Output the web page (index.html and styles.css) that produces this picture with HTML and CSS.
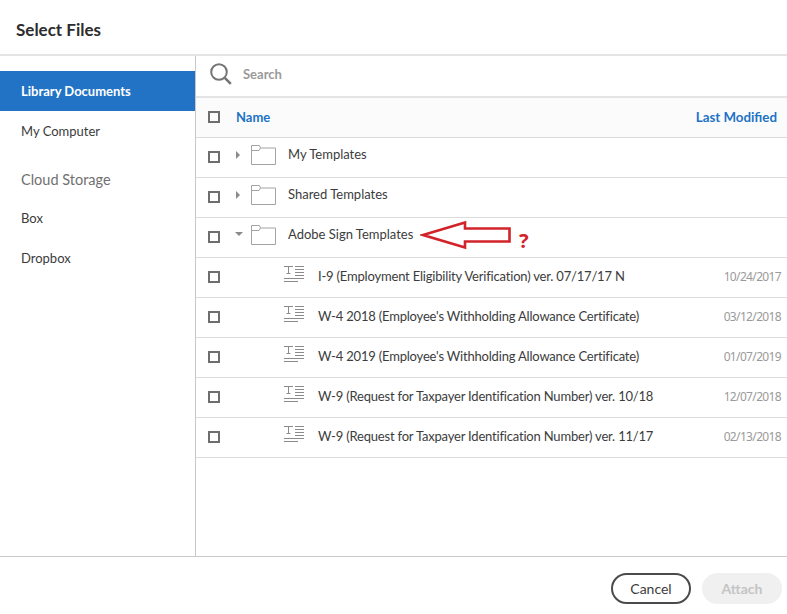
FILE: index.html
```html
<!DOCTYPE html>
<html lang="en">
<head>
    <meta charset="UTF-8">
    <title>Select Files</title>
    <link rel="stylesheet" href="styles.css">
</head>
<body>
    <svg width="0" height="0" class="icon-defs">
        <symbol id="folder" viewBox="0 0 25 20">
            <path d="M0.5 19.5V0.5h8l1 2.5h15v16.5z M0.5 5.5h7.5l1.5-2.5" fill="none" stroke="#a3a3a3" stroke-width="1"/>
        </symbol>
        <symbol id="doc" viewBox="0 0 22 20">
            <path d="M1 1.5h9M5.5 1.5v7M3.5 8.5h4M12 1.5h9M12 4.5h9M12 7.5h9M12 10.5h9M1 13.5h20M1 16.5h14" fill="none" stroke="#8a8a8a" stroke-width="1"/>
        </symbol>
    </svg>

    <div class="dialog">
        <h1 class="dialog-title">Select Files</h1>

        <div class="dialog-body">
            <nav class="sidebar">
                <a class="nav-item active">Library Documents</a>
                <a class="nav-item">My Computer</a>
                <div class="nav-heading">Cloud Storage</div>
                <a class="nav-item">Box</a>
                <a class="nav-item">Dropbox</a>
            </nav>

            <main class="files">
                <div class="search-row">
                    <svg class="search-icon" width="24" height="24" viewBox="0 0 24 24">
                        <circle cx="10" cy="10" r="7.8" fill="none" stroke="#757575" stroke-width="2"/>
                        <path d="M15.8 15.8l6 6" stroke="#757575" stroke-width="2.6" fill="none"/>
                    </svg>
                    <span class="search-text">Search</span>
                </div>

                <div class="head-row">
                    <span class="check"></span>
                    <span class="head-name">Name</span>
                    <span class="head-date">Last Modified</span>
                </div>

                <div class="row">
                    <span class="check"></span>
                    <span class="caret"></span>
                    <svg class="folder"><use href="#folder"/></svg>
                    <span class="folder-name">My Templates</span>
                </div>
                <div class="row">
                    <span class="check"></span>
                    <span class="caret"></span>
                    <svg class="folder"><use href="#folder"/></svg>
                    <span class="folder-name">Shared Templates</span>
                </div>
                <div class="row">
                    <span class="check"></span>
                    <span class="caret open"></span>
                    <svg class="folder"><use href="#folder"/></svg>
                    <span class="folder-name">Adobe Sign Templates</span>
                </div>
                <div class="row">
                    <span class="check"></span>
                    <svg class="doc"><use href="#doc"/></svg>
                    <span class="doc-name">I-9 (Employment Eligibility Verification) ver. 07/17/17 N</span>
                    <span class="date">10/24/2017</span>
                </div>
                <div class="row">
                    <span class="check"></span>
                    <svg class="doc"><use href="#doc"/></svg>
                    <span class="doc-name">W-4 2018 (Employee's Withholding Allowance Certificate)</span>
                    <span class="date">03/12/2018</span>
                </div>
                <div class="row">
                    <span class="check"></span>
                    <svg class="doc"><use href="#doc"/></svg>
                    <span class="doc-name">W-4 2019 (Employee's Withholding Allowance Certificate)</span>
                    <span class="date">01/07/2019</span>
                </div>
                <div class="row">
                    <span class="check"></span>
                    <svg class="doc"><use href="#doc"/></svg>
                    <span class="doc-name">W-9 (Request for Taxpayer Identification Number) ver. 10/18</span>
                    <span class="date">12/07/2018</span>
                </div>
                <div class="row">
                    <span class="check"></span>
                    <svg class="doc"><use href="#doc"/></svg>
                    <span class="doc-name">W-9 (Request for Taxpayer Identification Number) ver. 11/17</span>
                    <span class="date">02/13/2018</span>
                </div>
            </main>
        </div>

        <div class="dialog-footer">
            <button class="btn">Cancel</button>
            <button class="btn btn-disabled" disabled>Attach</button>
        </div>
    </div>

    <!-- red annotation drawn over the screenshot -->
    <svg class="arrow" width="92" height="30" viewBox="0 0 92 30">
        <path d="M3 15L45 2.5v6h44.5v13H45v6z" fill="none" stroke="#d2232a" stroke-width="2.6"/>
    </svg>
    <span class="question">?</span>
</body>
</html>
```

FILE: styles.css
```css
* {
    margin: 0;
    padding: 0;
    box-sizing: border-box;
}

body {
    font-family: 'Lato', sans-serif;
    background: white;
    color: #3c3c3c;
    font-size: 13px;
    width: 787px;
    height: 614px;
    overflow: hidden;
    position: relative;
}

.icon-defs {
    position: absolute;
}

.dialog {
    height: 614px;
    display: flex;
    flex-direction: column;
}

.dialog-title {
    height: 56px;
    padding: 18px 0 0 16px;
    font-size: 17px;
    line-height: 24px;
    font-weight: 700;
    color: #2c2c2c;
    border-bottom: 2px solid #e4e4e4;
}

.dialog-body {
    height: 500px;
    display: flex;
}

.sidebar {
    width: 196px;
    padding-top: 15px;
    border-right: 1px solid #c8c8c8;
}

.nav-item {
    display: block;
    height: 40px;
    line-height: 40px;
    padding-left: 21px;
}

.nav-item.active {
    background: #2273c5;
    color: white;
    font-weight: 700;
}

.nav-heading {
    height: 47px;
    padding-top: 18px;
    padding-left: 21px;
    font-size: 14.5px;
    line-height: 22px;
    color: #707070;
}

.files {
    flex: 1;
}

.search-row {
    height: 42px;
    padding: 0 0 4px 13px;
    display: flex;
    align-items: center;
    border-bottom: 2px solid #e4e4e4;
}

.search-text {
    margin-left: 10px;
    color: #9a9a9a;
    font-weight: 700;
}

.head-row,
.row {
    height: 40px;
    display: flex;
    align-items: center;
    padding-left: 12px;
    border-bottom: 1px solid #dcdcdc;
}

.head-row {
    background: #fbfbfb;
}

.check {
    width: 12px;
    height: 12px;
    border: 2px solid #6e6e6e;
    flex-shrink: 0;
    margin-top: -1px;
}

.head-name {
    margin-left: 16px;
    margin-top: -2px;
    color: #2273c5;
    font-weight: 700;
}

.head-date {
    margin-left: auto;
    margin-top: -2px;
    margin-right: 10px;
    font-size: 13.3px;
    color: #2273c5;
    font-weight: 700;
}

.caret {
    width: 0;
    height: 0;
    margin-left: 16px;
    margin-top: -5px;
    border-left: 4px solid #8a8a8a;
    border-top: 4px solid transparent;
    border-bottom: 4px solid transparent;
}

.caret.open {
    margin-left: 15px;
    margin-right: -3px;
    margin-top: -7px;
    border-left: 4px solid transparent;
    border-right: 4px solid transparent;
    border-top: 4px solid #8a8a8a;
    border-bottom: none;
}

.folder {
    width: 25px;
    height: 20px;
    margin-left: 11px;
    margin-top: -5px;
}

.folder-name {
    margin-left: 12px;
    margin-top: -7px;
}

.doc {
    width: 22px;
    height: 20px;
    margin-left: 63px;
    margin-top: -5px;
}

.doc-name {
    margin-left: 13px;
    margin-top: -4px;
    letter-spacing: -0.19px;
}

.date {
    margin-left: auto;
    margin-right: 6px;
    margin-top: -2px;
    font-family: 'Noto Sans', sans-serif;
    font-size: 12px;
    letter-spacing: -0.65px;
    color: #9a9a9a;
}

.dialog-footer {
    flex: 1;
    display: flex;
    justify-content: flex-end;
    gap: 11px;
    padding: 16px 5px 0 0;
    border-top: 1px solid #c8c8c8;
}

.btn {
    width: 80px;
    height: 31px;
    border: 2px solid #4b4b4b;
    border-radius: 16px;
    background: white;
    color: #3c3c3c;
    font-family: 'Lato', sans-serif;
    font-size: 14px;
}

.btn-disabled {
    background: #f0f0f0;
    border-color: #f0f0f0;
    color: #c4c4c4;
    font-weight: 700;
}

.arrow {
    position: absolute;
    left: 420px;
    top: 220px;
}

.question {
    position: absolute;
    left: 519px;
    top: 227px;
    font-family: 'Noto Sans', sans-serif;
    font-size: 20px;
    font-weight: bold;
    color: #d2232a;
}
```
